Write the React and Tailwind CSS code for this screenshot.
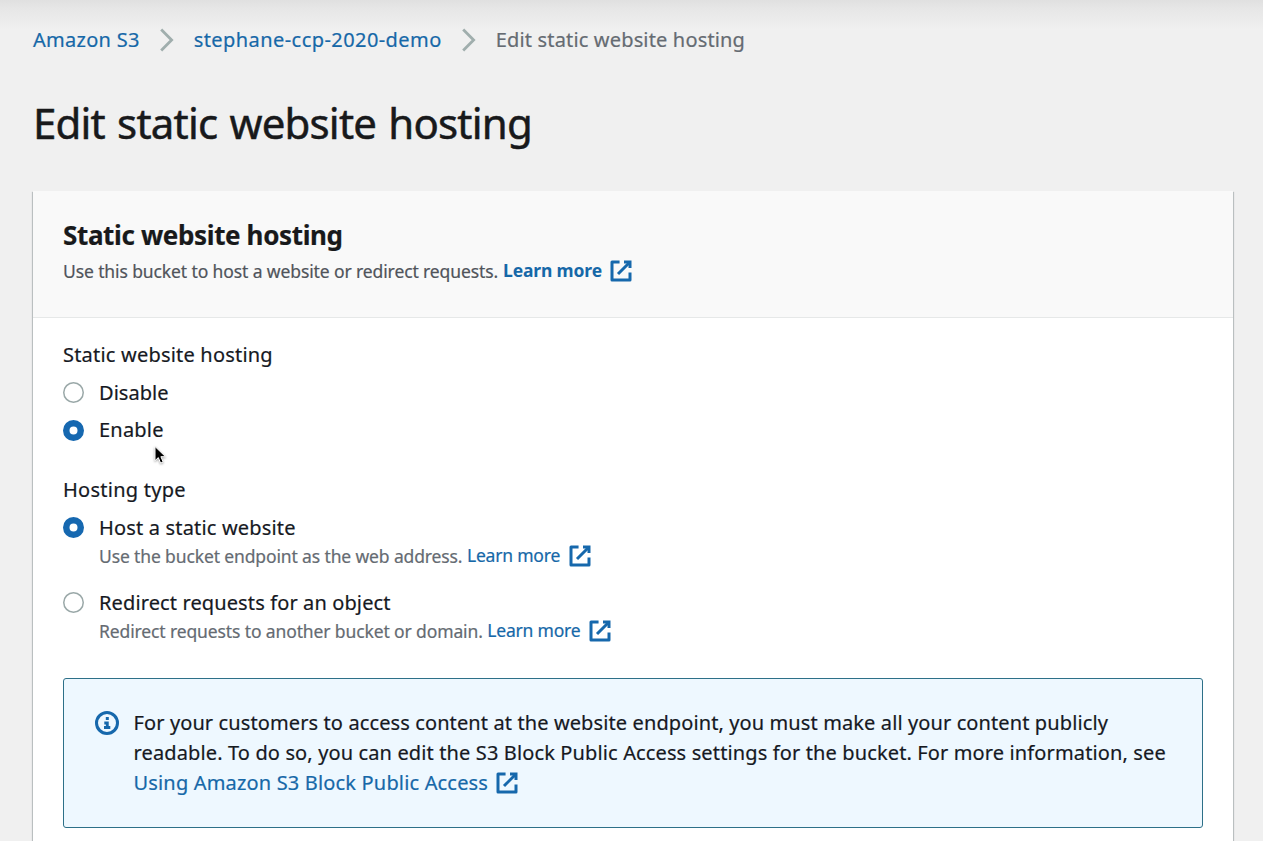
function Chevron({ className }) {
  return (
    <svg className={`h-[24px] w-[14px] shrink-0 ${className}`} viewBox="0 0 14 24" fill="none" stroke="#a0aead" strokeWidth="2.8">
      <path d="M1.2 1.6 11.6 12 1.2 22.4" />
    </svg>
  );
}

function ExternalIcon({ className }) {
  return (
    <svg className={`h-6 w-6 shrink-0 ${className}`} viewBox="0 0 16 16" fill="none" stroke="#1668ac" strokeWidth="2">
      <path d="M10 2h4v4" />
      <path d="m6 10 8-8" />
      <path d="M14 9.05V14H2V2h5.04" strokeLinejoin="round" />
    </svg>
  );
}

function InfoIcon() {
  return (
    <svg className="mt-px h-6 w-6 shrink-0" viewBox="0 0 16 16" fill="none" stroke="#1668ac" strokeWidth="2">
      <circle cx="8" cy="8" r="7" />
      <path d="M8.2 11V8H6.2M10.2 11H6" strokeWidth="1.9" />
      <path d="M8.2 6V4" strokeWidth="2" />
    </svg>
  );
}

function Radio({ checked }) {
  return (
    <svg className="h-[21px] w-[21px] shrink-0" viewBox="0 0 21 21" fill="#fff">
      {checked ? (
        <circle cx="10.5" cy="10.5" r="7.25" stroke="#1668b0" strokeWidth="6.5" />
      ) : (
        <circle cx="10.5" cy="10.5" r="9.75" stroke="#9aa8a8" strokeWidth="1.5" />
      )}
    </svg>
  );
}

function Option({ checked, label, labelClass, children, className }) {
  return (
    <div className={className}>
      <div className="flex h-[28px] items-center gap-[15px]">
        <Radio checked={checked} />
        <span className={`pt-[2px] ${labelClass}`}>{label}</span>
      </div>
      {children}
    </div>
  );
}

function Cursor() {
  return (
    <svg className="absolute top-[445px] left-[153px] h-[21px] w-[15px] drop-shadow-[0_1px_1px_rgba(0,0,0,0.35)]" viewBox="0 0 15 21">
      <path d="M2 1.5v14.2l3.3-3.1 2.3 5.5 2.6-1.1-2.3-5.3h4.6Z" fill="#000" stroke="#fff" strokeWidth="1" />
    </svg>
  );
}

export default function App() {
  return (
    <div className="relative h-[841px] w-full overflow-hidden bg-[#f0f0f0] font-['Noto_Sans','Open_Sans',sans-serif] text-[20px] whitespace-nowrap text-[#16191f] [-webkit-text-stroke:0.2px]">
      <div className="h-full bg-[linear-gradient(#e0e0e0_0px,#e6e6e6_8px,#f0f0f0_30px)] px-[33px] pt-[25px] pr-[30px]">
        <nav className="flex h-[30px] items-center">
          <a className="tracking-[0.28px] text-[#1668a8]">Amazon S3</a>
          <Chevron className="mr-5 ml-5" />
          <a className="tracking-[0.43px] text-[#1668a8]">stephane-ccp-2020-demo</a>
          <Chevron className="mr-5 ml-5" />
          <span className="tracking-[0.16px] text-[#656b72]">Edit static website hosting</span>
        </nav>
        <h1 className="mt-[43px] h-[50px] text-[42px] leading-[50px] tracking-[-0.8px] text-[#18191b] [-webkit-text-stroke:0.5px] [word-spacing:2px]">
          Edit static website hosting
        </h1>

        <section className="mt-[43px] h-[700px] bg-white shadow-[0_1px_1px_0_rgba(0,28,36,0.3),1px_1px_1px_0_rgba(0,28,36,0.18),-1px_1px_1px_0_rgba(0,28,36,0.18)]">
          <header className="h-[127px] border-b border-[#e6e8e8] bg-[#f9f9f9] px-[30px] pt-[26px]">
            <h2 className="h-[36px] text-[26px] leading-[36px] font-bold tracking-[-0.36px] text-[#18191b]">
              Static website hosting
            </h2>
            <p className="mt-[3px] flex h-[30px] items-center text-[17.5px] text-[#50545b]">
              <span className="tracking-[-0.11px]">Use this bucket to host a website or redirect requests.</span>
              <a className="ml-[5px] pb-[2px] font-bold tracking-[-0.15px] text-[#1668a8] [-webkit-text-stroke:0px]">Learn more</a>
              <ExternalIcon className="ml-[7.5px]" />
            </p>
          </header>

          <div className="px-[30px] pt-[22px] leading-[30px]">
            <div className="h-[30px] tracking-[0.2px]">Static website hosting</div>
            <Option className="mt-[8px]" label="Disable" labelClass="tracking-[0.05px]" />
            <Option className="mt-[10px]" checked label="Enable" labelClass="-mt-[2px] tracking-[0.2px]" />

            <div className="mt-[31px] h-[30px] tracking-[0.25px]">Hosting type</div>
            <Option className="mt-[8px]" checked label="Host a static website" labelClass="tracking-[0.17px]">
              <p className="mt-px flex h-[28px] items-center pl-[36px] text-[17.5px] text-[#656b72]">
                <span className="tracking-[-0.13px]">Use the bucket endpoint as the web address.</span>
                <a className="ml-[4.5px] pb-[2px] tracking-[-0.2px] text-[#1668a8]">Learn more</a>
                <ExternalIcon className="ml-[8px]" />
              </p>
            </Option>
            <Option className="mt-[18px]" label="Redirect requests for an object" labelClass="tracking-[0.12px]">
              <p className="mt-px flex h-[28px] items-center pl-[36px] text-[17.5px] text-[#656b72]">
                <span className="tracking-[-0.12px]">Redirect requests to another bucket or domain.</span>
                <a className="ml-[4.5px] pb-[2px] tracking-[-0.2px] text-[#1668a8]">Learn more</a>
                <ExternalIcon className="ml-[8px]" />
              </p>
            </Option>

            <div className="mt-[33px] flex h-[150px] gap-[14.5px] rounded-[3px] border border-[#2d7088] bg-[#eef8ff] pt-[29px] pl-[31px]">
              <div className="pt-[2px]">
                <InfoIcon />
              </div>
              <div>
                <p className="tracking-[0.11px]">
                  For your customers to access content at the website endpoint, you must make all your content publicly
                </p>
                <p className="tracking-[0.13px]">
                  readable. To do so, you can edit the S3 Block Public Access settings for the bucket. For more information, see
                </p>
                <p className="flex items-center text-[#1668a8]">
                  <a className="tracking-[0.17px]">Using Amazon S3 Block Public Access</a>
                  <ExternalIcon className="ml-[7px]" />
                </p>
              </div>
            </div>
          </div>
        </section>
      </div>
      <Cursor />
    </div>
  );
}
